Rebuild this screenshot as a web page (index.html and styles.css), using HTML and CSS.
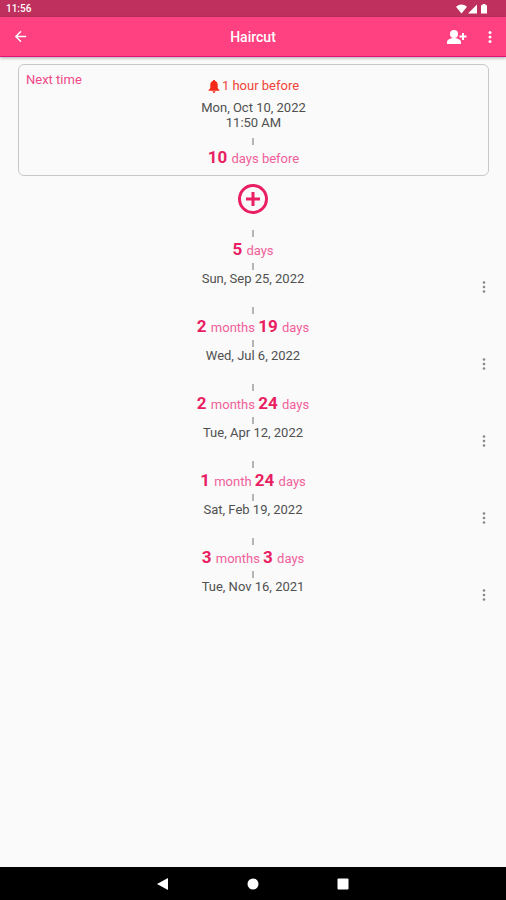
FILE: index.html
```html
<!DOCTYPE html>
<html lang="en">
<head>
<meta charset="utf-8">
<meta name="viewport" content="width=device-width, initial-scale=1">
<title>Haircut</title>
<link rel="stylesheet" href="styles.css">
</head>
<body>
<div class="status">
  <span>11:56</span>
  <svg class="status-icons" viewBox="0 0 34 12" aria-hidden="true"><path d="M0 3.7Q5.500-.8 11 3.700L5.500 10.500Z"/><path d="M12 10.500 21 1.500v9Z"/><path d="M25 2.200h1.500V1h3v1.200H31v8.300h-6Z"/></svg>
</div>
<header class="appbar">
  <button class="icon-btn" aria-label="Back"><svg class="back" viewBox="0 0 24 24"><path d="M20 11H7.830l5.590-5.590L12 4l-8 8 8 8 1.410-1.410L7.830 13H20v-2z"/></svg></button>
  <h1>Haircut</h1>
  <div class="actions">
    <button class="icon-btn" aria-label="Add person"><svg class="person" viewBox="0 0 21 16"><circle cx="8" cy="5" r="4"/><path d="M1 15v-2c0-2.600 4.600-4 7-4s7 1.400 7 4v2Z"/><path d="M16 4h2v2.500h2.500v2H18V11h-2V8.500h-2.500v-2H16Z"/></svg></button>
    <button class="icon-btn" aria-label="More options"><svg class="dots" viewBox="0 0 4 14"><circle cx="2" cy="2.500" r="1.500"/><circle cx="2" cy="7" r="1.500"/><circle cx="2" cy="11.500" r="1.500"/></svg></button>
  </div>
</header>
<main>
  <section class="next">
    <h2>Next time</h2>
    <div class="next-body">
      <p class="alarm"><svg viewBox="0 0 12 14" aria-hidden="true"><path d="M6 0c.8 0 1.200.5 1.200 1.200C9 1.800 10 3.400 10 5.400V9l1.800 1.700v.8H.2v-.8L2 9V5.400c0-2 1-3.600 2.800-4.200C4.800.5 5.200 0 6 0ZM4.500 12.200h3C7.500 13.200 6.900 14 6 14s-1.500-.8-1.500-1.800Z"/></svg>1 hour before</p>
      <p class="date">Mon, Oct 10, 2022<br>11:50 AM</p>
      <i class="tick"></i>
      <p class="span"><b>10</b> days before</p>
    </div>
  </section>
  <button class="add" aria-label="Add date"><svg viewBox="0 0 30 30"><circle cx="15" cy="15" r="13.500"/><path d="M15 8v14M8 15h14"/></svg></button>
  <ol class="history">
    <li><div class="entry"><i class="tick"></i><p class="span"><b>5</b> days</p><i class="tick"></i><p class="date">Sun, Sep 25, 2022</p></div><button class="more" aria-label="Options for Sep 25"><svg class="dots" viewBox="0 0 4 14"><circle cx="2" cy="2.500" r="1.300"/><circle cx="2" cy="7" r="1.300"/><circle cx="2" cy="11.500" r="1.300"/></svg></button></li>
    <li><div class="entry"><i class="tick"></i><p class="span"><b>2</b> months <b>19</b> days</p><i class="tick"></i><p class="date">Wed, Jul 6, 2022</p></div><button class="more" aria-label="Options for Jul 6"><svg class="dots" viewBox="0 0 4 14"><circle cx="2" cy="2.500" r="1.300"/><circle cx="2" cy="7" r="1.300"/><circle cx="2" cy="11.500" r="1.300"/></svg></button></li>
    <li><div class="entry"><i class="tick"></i><p class="span"><b>2</b> months <b>24</b> days</p><i class="tick"></i><p class="date">Tue, Apr 12, 2022</p></div><button class="more" aria-label="Options for Apr 12"><svg class="dots" viewBox="0 0 4 14"><circle cx="2" cy="2.500" r="1.300"/><circle cx="2" cy="7" r="1.300"/><circle cx="2" cy="11.500" r="1.300"/></svg></button></li>
    <li><div class="entry"><i class="tick"></i><p class="span"><b>1</b> month <b>24</b> days</p><i class="tick"></i><p class="date">Sat, Feb 19, 2022</p></div><button class="more" aria-label="Options for Feb 19"><svg class="dots" viewBox="0 0 4 14"><circle cx="2" cy="2.500" r="1.300"/><circle cx="2" cy="7" r="1.300"/><circle cx="2" cy="11.500" r="1.300"/></svg></button></li>
    <li><div class="entry"><i class="tick"></i><p class="span"><b>3</b> months <b>3</b> days</p><i class="tick"></i><p class="date">Tue, Nov 16, 2021</p></div><button class="more" aria-label="Options for Nov 16"><svg class="dots" viewBox="0 0 4 14"><circle cx="2" cy="2.500" r="1.300"/><circle cx="2" cy="7" r="1.300"/><circle cx="2" cy="11.500" r="1.300"/></svg></button></li>
  </ol>
</main>
<nav class="system-nav" aria-label="System">
  <button aria-label="Back"><svg viewBox="0 0 12 12"><path d="M0 6 11 0v12Z"/></svg></button>
  <button aria-label="Home"><svg viewBox="0 0 12 12"><circle cx="6" cy="6" r="5.500"/></svg></button>
  <button aria-label="Recent apps"><svg viewBox="0 0 12 12"><rect x="0.500" y="0.500" width="11" height="11" rx="1"/></svg></button>
</nav>
</body>
</html>
```
FILE: styles.css
```css
* {
  box-sizing: border-box;
}

body {
  margin: 0;
  min-height: 100vh;
  display: flex;
  flex-direction: column;
  background: #fafafa;
  color: #505050;
  font: 13px/16px Roboto, sans-serif;
}

h1, h2, p, ol {
  margin: 0;
  padding: 0;
}

button {
  display: flex;
  align-items: center;
  justify-content: center;
  padding: 0;
  border: 0;
  background: none;
  color: inherit;
}

svg {
  display: block;
  fill: currentColor;
}

.status {
  display: flex;
  align-items: center;
  justify-content: space-between;
  height: 17px;
  padding: 0 16px 0 6px;
  background: #bf305f;
  color: #fff;
  font-size: 10px;
  font-weight: 500;
}

.status-icons {
  width: 34px;
  height: 12px;
}

.appbar {
  display: grid;
  grid-template-columns: 1fr auto 1fr;
  align-items: center;
  height: 40px;
  padding: 0 4px;
  background: #ff4081;
  border-bottom: 1px solid #e3127a;
  box-shadow: 0 1px 3px #0005;
  color: #fff;
}

.appbar h1 {
  font-size: 14px;
  font-weight: 500;
}

.actions {
  display: flex;
  justify-content: flex-end;
  gap: 10px;
}

.icon-btn {
  width: 24px;
  height: 32px;
}

.appbar > .icon-btn {
  margin-left: 4px;
}

.back {
  width: 17px;
  height: 17px;
}

.person {
  width: 21px;
  height: 16px;
}

.dots {
  width: 4px;
  height: 14px;
}

main {
  flex: 1;
  display: flex;
  flex-direction: column;
  align-items: center;
  padding-top: 7px;
}

.next {
  display: grid;
  grid-template-columns: 1fr auto 1fr;
  align-self: stretch;
  margin: 0 17px 0 18px;
  padding: 7px 7px 4px;
  border: 1px solid #c8c8c8;
  border-radius: 6px;
}

.next h2 {
  color: #f04888;
  font-size: 13px;
  font-weight: 400;
}

.next-body,
.entry {
  display: flex;
  flex-direction: column;
  align-items: center;
}

.alarm {
  display: flex;
  align-items: center;
  gap: 2px;
  margin: 6px 0;
  color: #f04438;
}

.alarm svg {
  width: 12px;
  height: 13px;
  color: #f52a18;
}

.date {
  line-height: 15px;
  text-align: center;
}

.tick {
  width: 2px;
  height: 7px;
  background: #b5b5b5;
}

.next-body .tick {
  margin-top: 8px;
}

.span {
  padding-top: 2px;
  color: #f0609a;
  line-height: 24px;
}

.span b {
  margin-right: 1px;
  color: #e91e63;
  font-size: 17px;
  font-weight: 700;
  line-height: 1;
}

.add {
  margin-top: 8px;
  color: #e91e63;
}

.add svg {
  width: 30px;
  height: 30px;
  fill: none;
  stroke: currentColor;
  stroke-width: 3;
}

.history {
  align-self: stretch;
  margin-top: 16px;
  list-style: none;
}

.history li {
  display: grid;
  grid-template-columns: 1fr auto 1fr;
  height: 77px;
}

.entry {
  grid-column: 2;
}

.entry .date {
  margin-top: 1px;
}

.more {
  align-self: end;
  justify-self: end;
  width: 24px;
  height: 24px;
  margin: 0 10px 8px;
  color: #888;
}

.system-nav {
  display: flex;
  align-items: center;
  justify-content: center;
  gap: 66px;
  height: 33px;
  background: #000;
  color: #fff;
}

.system-nav button {
  width: 24px;
  height: 24px;
}

.system-nav svg {
  width: 12px;
  height: 12px;
}
```
